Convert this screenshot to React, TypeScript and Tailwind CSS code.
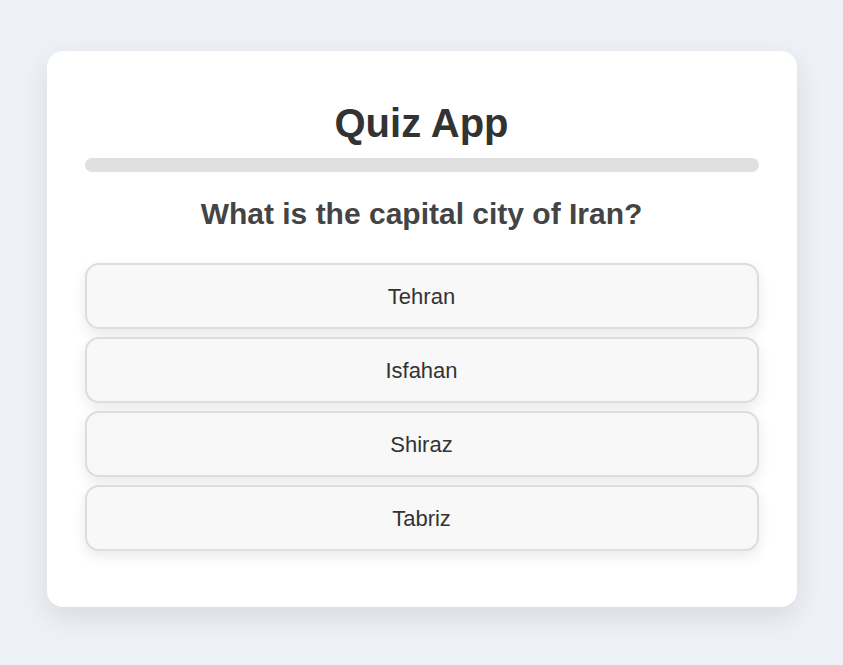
import React, { useState } from 'react';

const options = ['Tehran', 'Isfahan', 'Shiraz', 'Tabriz'];

export default function App() {
  const [selected, setSelected] = useState<string | null>(null);

  return (
    <div className="min-h-screen bg-[#eef1f6] pt-[51px] font-['Liberation_Sans',Arial,sans-serif]">
      <div className="mx-auto w-[750px] rounded-2xl bg-white px-[38px] pt-[49px] pb-[56px] shadow-[0_10px_30px_rgba(0,0,0,0.1)]">
        <h1 className="text-center text-[40px] font-bold leading-[46px] text-[#333]">Quiz App</h1>
        <div className="mt-[12px] h-[14px] w-full rounded-full bg-[#e0e0e0]" />
        <h2 className="mt-[25px] text-center text-[30px] font-bold leading-[34px] text-[#444]">
          What is the capital city of Iran?
        </h2>
        <div className="mt-[32px] flex flex-col gap-[8px]">
          {options.map((opt) => (
            <button
              key={opt}
              onClick={() => setSelected(opt)}
              className={`h-[66px] w-full rounded-[14px] border-2 border-[#ddd] bg-[#f8f8f8] text-[22px] text-[#333] shadow-[0_5px_14px_rgba(0,0,0,0.09)] ${
                selected === opt ? 'bg-[#eef1f6]' : ''
              }`}
            >
              {opt}
            </button>
          ))}
        </div>
      </div>
    </div>
  );
}
